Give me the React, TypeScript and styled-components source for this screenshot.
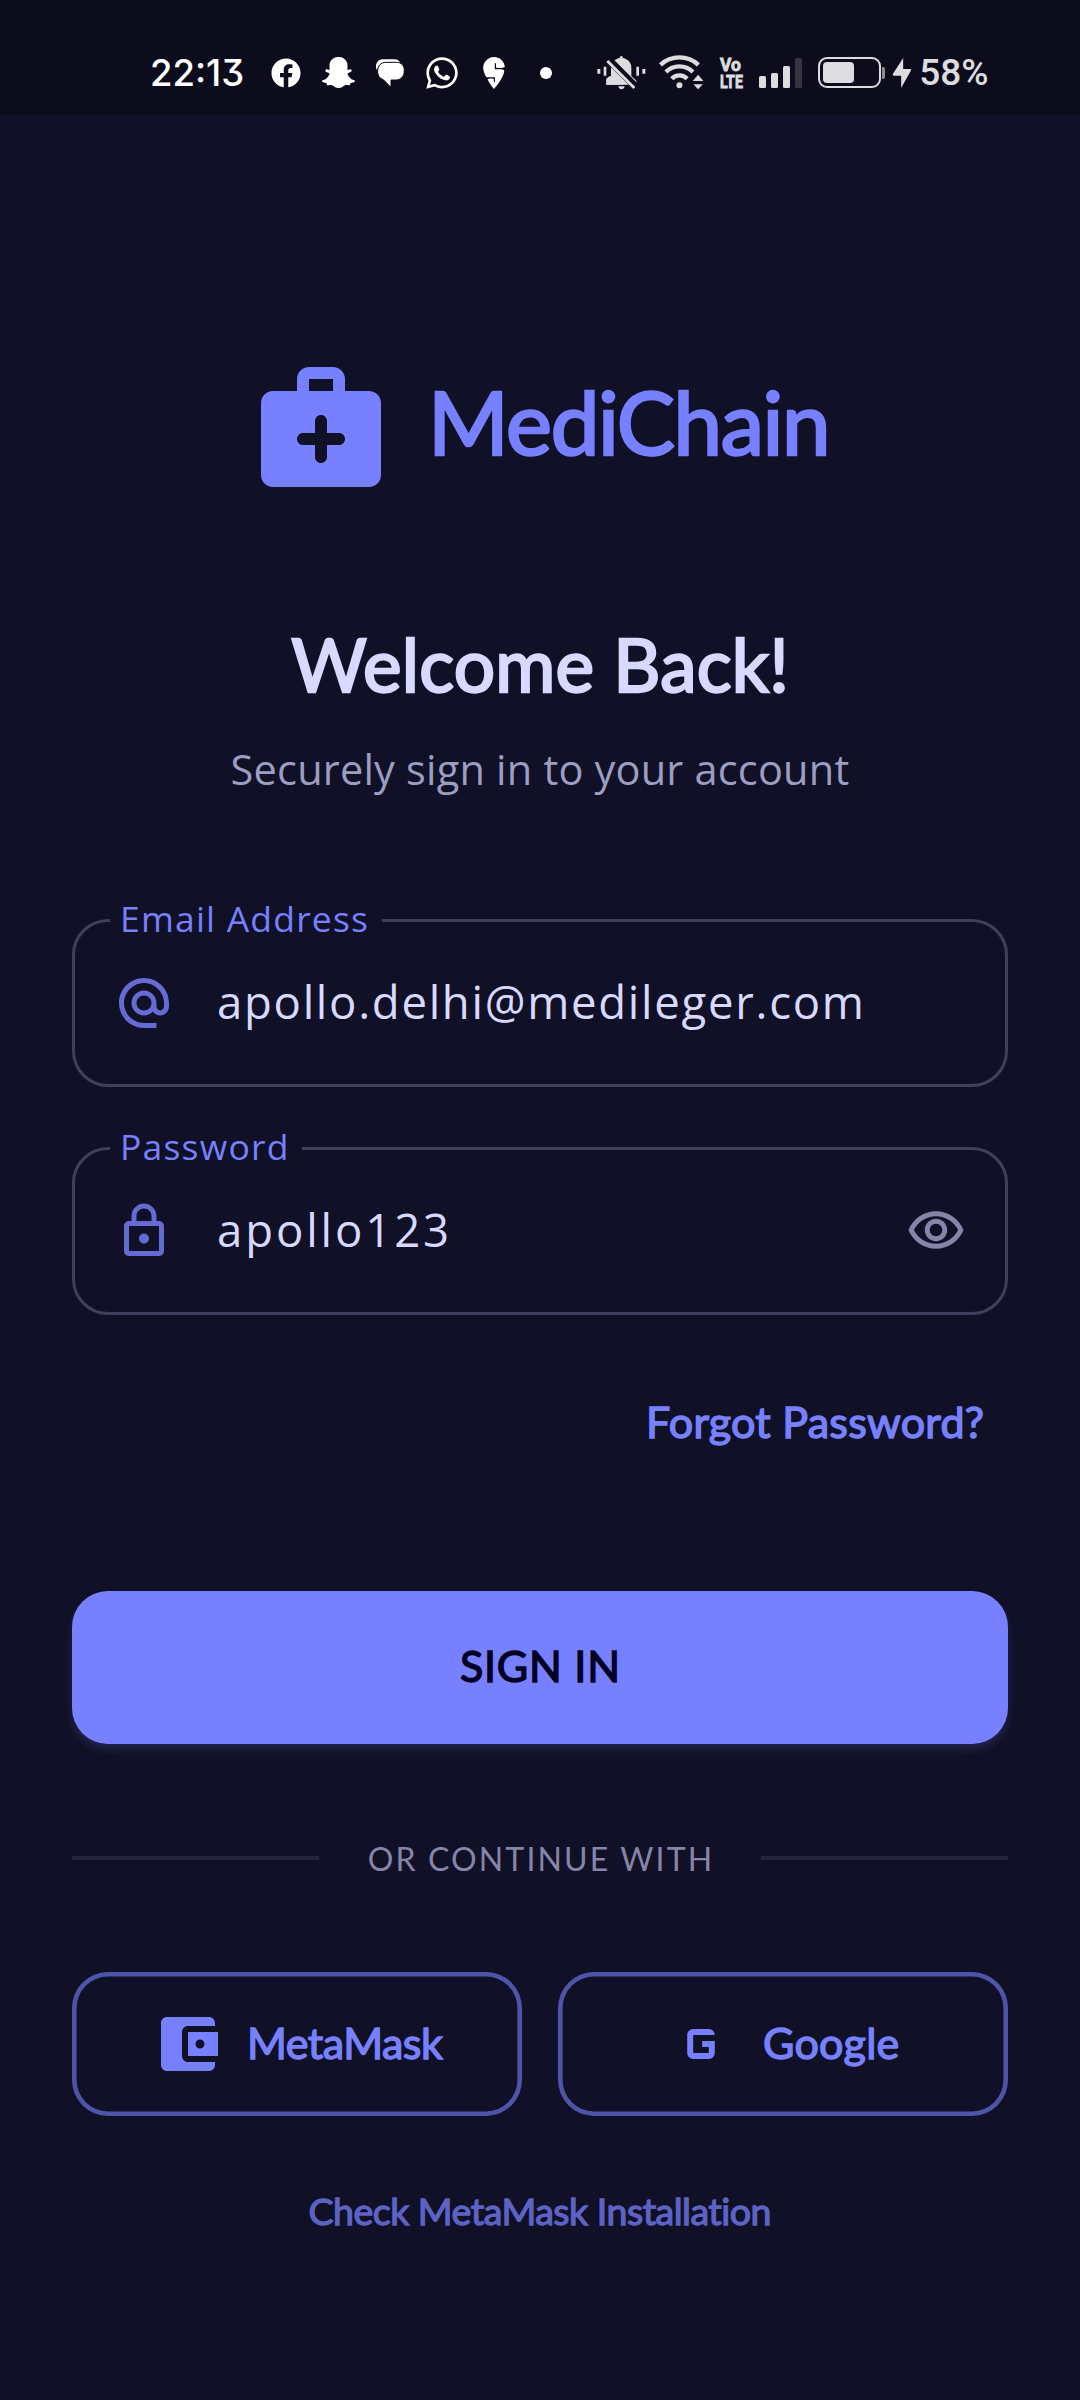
import React from "react";
import styled, { createGlobalStyle } from "styled-components";
import { FaFacebook, FaSnapchatGhost, FaWhatsapp } from "react-icons/fa";
import { SiSwiggy } from "react-icons/si";

const color = {
  bg: "#101026",
  bar: "#0d0c1c",
  primary: "#7781ff",
  icon: "#646bd4",
  text: "#d7d9ff",
  muted: "#9b9dc1",
  faint: "#8685a9",
  outline: "#41405c",
  system: "#dddddf",
};

const GlobalStyle = createGlobalStyle`
  * { box-sizing: border-box; }
  html, body { margin: 0; background: ${color.bg}; }
  button, input { font: inherit; border: 0; background: none; padding: 0; margin: 0; }
`;

const Screen = styled.div`
  width: 1080px;
  height: 2400px;
  overflow: hidden;
  background: ${color.bg};
  font-family: "Open Sans", "Noto Sans", sans-serif;
  white-space: nowrap;
`;

/* Status bar */
const StatusBar = styled.header`
  display: flex;
  align-items: center;
  height: 115px;
  padding: 30px 0 0 150px;
  background: ${color.bar};
  color: #fff;
`;
const Clock = styled.span`
  width: 96px;
  font: 500 36.5px/50px Inter, sans-serif;
  font-feature-settings: "cv09";
`;
const Notifications = styled.div`
  display: flex;
  align-items: center;
  padding-left: 25px;
`;
const NoteIcon = styled.div<{ $w: number; $gap?: number }>`
  display: flex;
  width: ${(p) => p.$w}px;
  margin-right: ${(p) => p.$gap ?? 0}px;
  svg { display: block; width: 100%; height: auto; }
`;
const MoreDot = styled.i`
  width: 12px;
  height: 12px;
  border-radius: 50%;
  background: #fff;
`;
const SystemIcons = styled.div`
  display: flex;
  align-items: center;
  margin-left: 45px;
  color: ${color.system};
  svg { display: block; flex: none; }
`;
const VoLte = styled.div`
  display: flex;
  flex-direction: column;
  align-items: flex-start;
  width: 22px;
  margin-left: 17px;
  font: 700 18px/17px Roboto, sans-serif;
`;
const VoLteLine = styled.span<{ $fit: number }>`
  transform: scaleX(${(p) => p.$fit});
  transform-origin: left;
  -webkit-text-stroke: 0.8px ${color.system};
`;
const Signal = styled.div`
  display: flex;
  align-items: flex-end;
  gap: 5px;
  height: 30px;
  margin-left: 17px;
`;
const SignalBar = styled.i<{ $h: number; $off?: boolean }>`
  width: 7px;
  height: ${(p) => p.$h}px;
  border-radius: 1.5px;
  background: ${(p) => (p.$off ? "#35343f" : color.system)};
`;
const Battery = styled.div`
  width: 63px;
  height: 31px;
  margin-left: 16px;
  padding: 3px;
  border: 2px solid ${color.system};
  border-radius: 9px;
`;
const Charge = styled.div`
  width: 31px;
  height: 21px;
  border-radius: 4px;
  background: ${color.system};
`;
const BatteryTip = styled.i`
  width: 3px;
  height: 12px;
  margin-left: 1px;
  border-radius: 0 2px 2px 0;
  background: #8b8b92;
`;
const Percent = styled.span`
  margin-left: 7px;
  padding-top: 1px;
  font: 500 37px/50px Roboto, sans-serif;
`;

/* Page */
const Main = styled.main`
  display: flex;
  flex-direction: column;
  padding: 0 72px;
`;
const Brand = styled.div`
  display: flex;
  align-items: center;
  height: 144px;
  margin: 240px 0 115px;
  padding-left: 177px;
  svg { display: block; }
`;
const Bold = styled.span<{ $size: number; $ls: number; $stroke?: number; $color?: string }>`
  display: block;
  font-family: Lato, sans-serif;
  font-size: ${(p) => p.$size}px;
  letter-spacing: ${(p) => p.$ls}px;
  margin-right: ${(p) => -p.$ls}px;
  color: ${(p) => p.$color ?? color.primary};
  -webkit-text-stroke: ${(p) => p.$stroke ?? 1.4}px ${(p) => p.$color ?? color.primary};
`;
const BrandName = styled.div`
  margin-left: 35px;
  padding-bottom: 11px;
  line-height: 110px;
`;
const Heading = styled.h1`
  height: 100px;
  margin: 0 0 30px;
  font-weight: 400;
  line-height: 100px;
  text-align: center;
`;
const Subtitle = styled.p`
  height: 50px;
  margin: 0 0 104px;
  font-size: 41.5px;
  letter-spacing: 0.2px;
  line-height: 50px;
  text-align: center;
  color: ${color.muted};
`;
const Field = styled.fieldset`
  height: 189px;
  min-width: 0;
  margin: 0 0 39px;
  padding: 0 39px 0 35px;
  border: 3px solid ${color.outline};
  border-radius: 36px;
`;
const Label = styled.legend<{ $w: number }>`
  width: ${(p) => p.$w}px;
  padding: 0 0 4px 10px;
  font-size: 35.5px;
  letter-spacing: 1.2px;
  line-height: 41px;
  color: ${color.primary};
`;
const FieldRow = styled.div`
  display: flex;
  align-items: center;
  height: 120px;
  padding-left: 4px;
  svg { display: block; flex: none; }
`;
const Value = styled.span<{ $ls: number }>`
  flex: 1;
  margin-left: 43px;
  padding-bottom: 5px;
  font-size: 45.5px;
  letter-spacing: ${(p) => p.$ls}px;
  line-height: 60px;
  color: ${color.text};
`;
const IconButton = styled.button`
  display: block;
  margin-top: -2px;
`;
const Forgot = styled.button`
  align-self: flex-end;
  height: 50px;
  margin: 43px 24px 144px 0;
  line-height: 50px;
`;
const SignIn = styled.button`
  height: 153px;
  padding-bottom: 5px;
  border-radius: 36px;
  background: ${color.primary};
  box-shadow: 0 6px 9px rgba(119, 129, 255, 0.17);
`;
const Divider = styled.div`
  display: flex;
  align-items: center;
  height: 40px;
  margin: 94px 0;
`;
const Rule = styled.i`
  width: 247px;
  height: 4px;
  background: #24243a;
`;
const DividerText = styled.span`
  flex: 1;
  padding-top: 1px;
  text-align: center;
  font: 32px/40px Lato, sans-serif;
  letter-spacing: 2.15px;
  text-indent: 2px;
  color: ${color.faint};
`;
const Providers = styled.div`
  display: grid;
  grid-template-columns: 1fr 1fr;
  gap: 36px;
`;
const Provider = styled.button<{ $left: number; $gap: number }>`
  display: flex;
  align-items: center;
  height: 144px;
  padding-left: ${(p) => p.$left}px;
  box-shadow: inset 0 0 0 4.6px #4f54ab;
  border-radius: 36px;
  svg { display: block; margin-right: ${(p) => p.$gap}px; }
  span { padding-bottom: 2px; line-height: 60px; }
`;
const Check = styled.button`
  height: 50px;
  margin-top: 70px;
  line-height: 50px;
`;

const Glyph = ({ d, size, fill }: { d: string; size: number; fill: string }) => (
  <svg width={size} height={size} viewBox="0 0 24 24" fill={fill} fillRule="evenodd">
    <path d={d} />
  </svg>
);

const paths = {
  medkit:
    "M20 6h-4V4c0-1.1-.9-2-2-2h-4c-1.1 0-2 .9-2 2v2H4c-1.1 0-2 .9-2 2v12c0 1.1.9 2 2 2h16c1.1 0 2-.9 2-2V8c0-1.1-.9-2-2-2zM10 4h4v2h-4V4zm5 11h-2v2c0 .55-.45 1-1 1s-1-.45-1-1v-2H9c-.55 0-1-.45-1-1s.45-1 1-1h2v-2c0-.55.45-1 1-1s1 .45 1 1v2h2c.55 0 1 .45 1 1s-.45 1-1 1z",
  at: "M12 2C6.48 2 2 6.48 2 12s4.480 10 10 10h5v-2h-5c-4.340 0-8-3.660-8-8s3.660-8 8-8 8 3.660 8 8v1.430c0 .79-.71 1.570-1.500 1.570s-1.500-.78-1.500-1.570V12c0-2.760-2.240-5-5-5s-5 2.240-5 5 2.240 5 5 5c1.380 0 2.640-.56 3.540-1.470.65.89 1.770 1.470 2.960 1.470 1.970 0 3.500-1.600 3.500-3.570V12c0-5.520-4.480-10-10-10zm0 13c-1.660 0-3-1.340-3-3s1.340-3 3-3 3 1.340 3 3-1.340 3-3 3z",
  lock: "M18 8h-1V6c0-2.760-2.240-5-5-5S7 3.240 7 6v2H6c-1.100 0-2 .9-2 2v10c0 1.100.9 2 2 2h12c1.100 0 2-.9 2-2V10c0-1.100-.9-2-2-2zM9 6c0-1.660 1.340-3 3-3s3 1.340 3 3v2H9V6zm9 14H6V10h12v10zm-6-3c1.100 0 2-.9 2-2s-.9-2-2-2-2 .9-2 2 .9 2 2 2z",
  eye: "M12 6.500c3.790 0 7.170 2.130 8.820 5.500-1.650 3.370-5.020 5.500-8.820 5.500S4.830 15.370 3.180 12C4.830 8.630 8.210 6.500 12 6.500m0-2C7 4.500 2.730 7.610 1 12c1.730 4.390 6 7.500 11 7.500s9.270-3.110 11-7.500c-1.730-4.390-6-7.500-11-7.500zm0 5c1.380 0 2.500 1.120 2.500 2.500s-1.120 2.500-2.500 2.500-2.500-1.120-2.500-2.500 1.120-2.500 2.500-2.500m0-2c-2.480 0-4.500 2.020-4.500 4.500s2.020 4.500 4.500 4.500 4.500-2.020 4.500-4.500-2.020-4.500-4.500-4.500z",
  wallet:
    "M10 16V8c0-1.100.89-2 2-2h9V5c0-1.100-.9-2-2-2H5c-1.110 0-2 .9-2 2v14c0 1.100.89 2 2 2h14c1.100 0 2-.9 2-2v-1h-9c-1.110 0-2-.9-2-2zm2-8v8h10V8H12zm4 5.500c-.83 0-1.500-.67-1.500-1.500s.67-1.500 1.500-1.500 1.500.67 1.500 1.500-.67 1.500-1.500 1.500z",
  g: "M9.400 7h5.200a2 2 0 0 1 2 2H9.400v6h5.200v-2h-2.200v-2h4.200v4a2 2 0 0 1-2 2H9.400a2 2 0 0 1-2-2V9a2 2 0 0 1 2-2z",
};

const ChatIcon = () => (
  <svg viewBox="0 0 84 84">
    <path fill="#fff" d="M22 1h34c8 0 14 4 16 10H30C14 12 6 20 3 34 0 30 0 26 0 22 0 8 10 1 22 1z" />
    <path
      fill="#fff"
      stroke={color.bar}
      strokeWidth="3"
      d="M30 10h32c14 0 23 10 23 24 0 18-10 29-26 29H45v22L22 62C9 57 5 48 5 37c0-16 9-27 25-27z"
    />
  </svg>
);

const MutedBell = () => (
  <svg width="48.700" height="34" viewBox="0 0 146 102" fill={color.system}>
    <path d="M1 39h9v14H1zM20 32h8v27h-8zM118 32h8v27h-8zM136 39h9v14h-9z" />
    <path d="M68 6a5 6 0 0 1 10 0c15 3 25 14 25 29v25l15 14v12H28V70c2-5 9-8 14-10V35c0-15 11-26 26-29zM64 91h19c-1 6-5 9-9.500 9S65 97 64 91z" />
    <path stroke={color.bar} strokeWidth="22" d="M30 6l96 96" />
    <path stroke={color.system} strokeWidth="9" d="M31 15l81 81" />
    <path d="M42 35l38 51H28V70c2-5 9-8 14-10z" />
  </svg>
);

const Wifi = () => (
  <svg width="44.500" height="35" viewBox="0 0 133 105" fill="none" stroke={color.system} strokeWidth="13">
    <path d="M4 29.500a84 84 0 0 1 114 0M20.500 51a57 57 0 0 1 81 0M38 71a32 32 0 0 1 46 0" />
    <circle cx="61" cy="91" r="9" fill={color.system} stroke="none" />
    <path d="M117 59l16 19h-32zM103 88h28l-14 15z" fill={color.system} stroke="none" />
  </svg>
);

const Bolt = () => (
  <svg width="20" height="30" viewBox="0 0 59 90" fill={color.system}>
    <path d="M33 0v33h21q5 0 2 5L27 90V53H5q-5 0-3-5z" />
  </svg>
);

export default function App() {
  return (
    <Screen>
      <GlobalStyle />
      <StatusBar>
        <Clock>22:13</Clock>
        <Notifications>
          <NoteIcon $w={30} $gap={21}><FaFacebook /></NoteIcon>
          <NoteIcon $w={33} $gap={21}><FaSnapchatGhost /></NoteIcon>
          <NoteIcon $w={28} $gap={20}><ChatIcon /></NoteIcon>
          <NoteIcon $w={36} $gap={18}><FaWhatsapp /></NoteIcon>
          <NoteIcon $w={32} $gap={30}><SiSwiggy /></NoteIcon>
          <MoreDot />
        </Notifications>
        <SystemIcons>
          <MutedBell />
          <NoteIcon $w={13} />
          <Wifi />
          <VoLte>
            <VoLteLine $fit={0.97}>Vo</VoLteLine>
            <VoLteLine $fit={0.79}>LTE</VoLteLine>
          </VoLte>
          <Signal>
            <SignalBar $h={12} />
            <SignalBar $h={15} />
            <SignalBar $h={22} />
            <SignalBar $h={30} $off />
          </Signal>
          <Battery><Charge /></Battery>
          <BatteryTip />
          <NoteIcon $w={7} />
          <Bolt />
          <Percent>58%</Percent>
        </SystemIcons>
      </StatusBar>

      <Main>
        <Brand>
          <Glyph d={paths.medkit} size={144} fill={color.primary} />
          <BrandName><Bold $size={87} $ls={-1.35} $stroke={2.6}>MediChain</Bold></BrandName>
        </Brand>
        <Heading><Bold $size={73} $ls={0.25} $stroke={2.4} $color={color.text}>Welcome Back!</Bold></Heading>
        <Subtitle>Securely sign in to your account</Subtitle>

        <Field>
          <Label $w={272}>Email Address</Label>
          <FieldRow>
            <Glyph d={paths.at} size={60} fill={color.icon} />
            <Value $ls={1.72}>apollo.delhi@medileger.com</Value>
          </FieldRow>
        </Field>
        <Field>
          <Label $w={191.5}>Password</Label>
          <FieldRow>
            <Glyph d={paths.lock} size={60} fill={color.icon} />
            <Value $ls={2.9}>apollo123</Value>
            <IconButton aria-label="Hide password"><Glyph d={paths.eye} size={60} fill={color.faint} /></IconButton>
          </FieldRow>
        </Field>

        <Forgot><Bold $size={43} $ls={0.25}>Forgot Password?</Bold></Forgot>
        <SignIn><Bold $size={43} $ls={0.75} $color="#020123">SIGN IN</Bold></SignIn>

        <Divider>
          <Rule />
          <DividerText>OR CONTINUE WITH</DividerText>
          <Rule />
        </Divider>

        <Providers>
          <Provider $left={79.5} $gap={23.5}>
            <Glyph d={paths.wallet} size={72} fill={color.primary} />
            <Bold $size={43} $ls={-0.5}>MetaMask</Bold>
          </Provider>
          <Provider $left={106.5} $gap={26.5}>
            <Glyph d={paths.g} size={72} fill={color.primary} />
            <Bold $size={43} $ls={0.25}>Google</Bold>
          </Provider>
        </Providers>
        <Check><Bold $size={37.5} $ls={-0.5} $stroke={1.3} $color="#5d63c4">Check MetaMask Installation</Bold></Check>
      </Main>
    </Screen>
  );
}
